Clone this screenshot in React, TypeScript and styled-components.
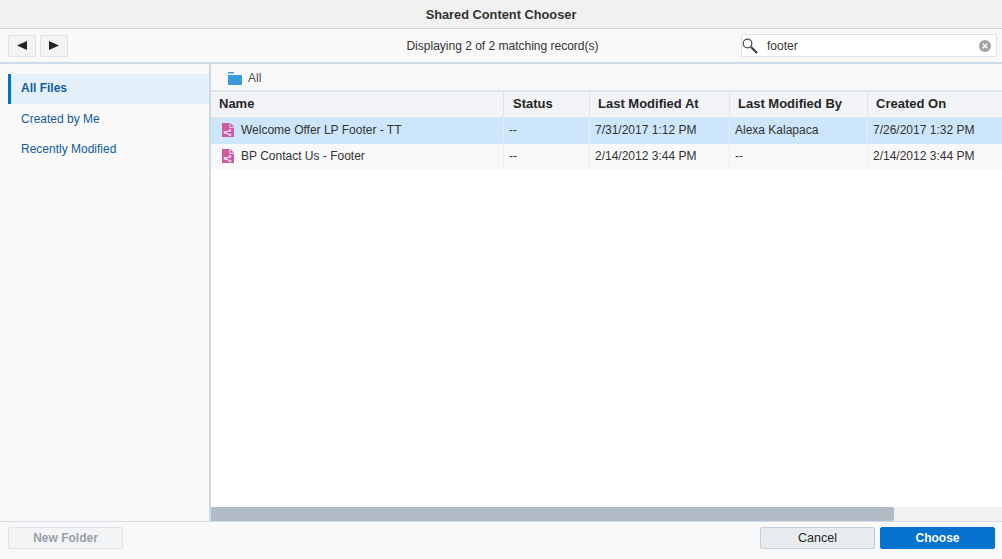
import styled, { createGlobalStyle } from 'styled-components'

const GlobalStyle = createGlobalStyle`
  html, body {
    margin: 0;
    padding: 0;
    background: #f9f9f9;
    font-family: "Liberation Sans", Arial, sans-serif;
    overflow: hidden;
  }
`

const Dialog = styled.div`
  width: 1002px;
  height: 559px;
  display: flex;
  flex-direction: column;
  background: #f9f9f9;
  color: #333;
  font-size: 12px;
`

const Title = styled.div`
  height: 29px;
  flex: none;
  box-sizing: border-box;
  display: flex;
  align-items: center;
  justify-content: center;
  padding-top: 1px;
  background: #f1f1f1;
  border-bottom: 1px solid #c9d5e2;
  font-size: 12.8px;
  font-weight: 700;
  color: #333;
`

const Toolbar = styled.div`
  height: 35px;
  flex: none;
  box-sizing: border-box;
  display: grid;
  grid-template-columns: 1fr auto 1fr;
  align-items: center;
  padding: 0 5px 0 8px;
  border-bottom: 2px solid #d0dae5;
`

const NavGroup = styled.div`
  display: flex;
  gap: 4px;
`

const NavButton = styled.button`
  width: 28px;
  height: 22px;
  padding: 0;
  display: flex;
  align-items: center;
  justify-content: center;
  background: #f3f4f6;
  border: 1px solid #dfe4ea;
  border-radius: 2px;
`

const Count = styled.div`
  color: #333;
  font-size: 12px;
`

const Search = styled.div`
  justify-self: end;
  width: 256px;
  height: 23px;
  box-sizing: border-box;
  display: flex;
  align-items: center;
  padding: 0 5px 0 0;
  background: #fff;
  border: 1px solid #dfe4ea;
  border-radius: 2px;
`

const SearchText = styled.span`
  flex: 1;
  margin-left: 9px;
  color: #333;
  font-size: 12px;
`

const Body = styled.div`
  flex: 1;
  min-height: 0;
  display: flex;
`

const Sidebar = styled.nav`
  width: 211px;
  flex: none;
  box-sizing: border-box;
  padding: 10px 0 0 8px;
  border-right: 2px solid #ced8e3;
`

const NavItem = styled.div<{ $active?: boolean }>`
  height: 30px;
  display: flex;
  align-items: center;
  box-sizing: border-box;
  padding-left: ${(p) => (p.$active ? '10px' : '13px')};
  padding-bottom: ${(p) => (p.$active ? '2px' : '0')};
  border-left: ${(p) => (p.$active ? '3px solid #0572ce' : 'none')};
  background: ${(p) => (p.$active ? '#e4f0fa' : 'transparent')};
  color: #145c9e;
  font-size: 12px;
  font-weight: ${(p) => (p.$active ? 700 : 400)};
`

const Main = styled.div`
  flex: 1;
  min-width: 0;
  display: flex;
  flex-direction: column;
  background: #fff;
`

const Crumb = styled.div`
  height: 28px;
  flex: none;
  box-sizing: border-box;
  display: flex;
  align-items: center;
  gap: 6px;
  padding: 2px 0 0 17px;
  background: #f9f9f9;
  border-bottom: 2px solid #dfe4ea;
  color: #4f4f4f;
  font-size: 12px;
`

const TableArea = styled.div`
  flex: 1;
  min-height: 0;
`

const Row = styled.div<{ $selected?: boolean; $head?: boolean }>`
  display: grid;
  grid-template-columns: 293px 86px 140px 138px 1fr;
  height: 26px;
  box-sizing: border-box;
  background: ${(p) => (p.$head ? '#f2f4f8' : p.$selected ? '#cde6fb' : '#f9f9f9')};
  border-bottom: ${(p) => (p.$head ? '1px solid #dfe4ea' : 'none')};
`

const HeadCell = styled.div`
  display: flex;
  align-items: center;
  padding: 0 0 3px 8px;
  border-right: 1px solid #dfe4ea;
  color: #252525;
  font-size: 13px;
  font-weight: 700;
  &:nth-child(2) {
    padding-left: 9px;
  }
  &:last-child {
    border-right: none;
  }
`

const Cell = styled.div`
  display: flex;
  align-items: center;
  gap: 7px;
  padding: 0 0 3px 5px;
  border-right: 1px solid #eceef1;
  color: #333;
  font-size: 12px;
  &:first-child {
    padding-left: 11px;
  }
  &:last-child {
    border-right: none;
  }
  svg {
    margin-top: 1px;
  }
`

const ScrollTrack = styled.div`
  height: 14px;
  flex: none;
  background: #f1f1f1;
`

const ScrollThumb = styled.div`
  width: 683px;
  height: 14px;
  background: #b1bcc7;
  border-radius: 0 2px 2px 0;
`

const Footer = styled.div`
  height: 38px;
  flex: none;
  box-sizing: border-box;
  display: flex;
  align-items: center;
  justify-content: space-between;
  padding: 0 7px 5px 8px;
  border-top: 1px solid #d4dde7;
`

const Actions = styled.div`
  display: flex;
  gap: 5px;
`

const DisabledButton = styled.button`
  width: 115px;
  height: 22px;
  padding: 0;
  background: #f3f4f6;
  border: 1px solid #dfe4ea;
  border-radius: 2px;
  color: #9aa0a6;
  font: 700 12px "Liberation Sans", Arial, sans-serif;
`

const CancelButton = styled.button`
  width: 115px;
  height: 22px;
  padding: 0;
  background: #e9ecef;
  border: 1px solid #c4ced7;
  border-radius: 2px;
  color: #252525;
  font: 400 12.5px "Liberation Sans", Arial, sans-serif;
`

const ChooseButton = styled.button`
  width: 115px;
  height: 22px;
  padding: 0;
  background: #0572ce;
  border: 1px solid #0572ce;
  border-radius: 2px;
  color: #fff;
  font: 700 12px "Liberation Sans", Arial, sans-serif;
`

const Triangle = ({ dir }: { dir: 'left' | 'right' }) => (
  <svg width="10" height="9" viewBox="0 0 10 9">
    <path d={dir === 'left' ? 'M0 4.500 10 0V9Z' : 'M10 4.500 0 0V9Z'} fill="#252525" />
  </svg>
)

const SearchIcon = () => (
  <svg width="16" height="16" viewBox="0 0 16 16" fill="none">
    <circle cx="5.500" cy="5.500" r="4.300" stroke="#4f4f4f" strokeWidth="1.300" />
    <path d="M9 9 15 15" stroke="#333" strokeWidth="2" />
  </svg>
)

const ClearIcon = () => (
  <svg width="12" height="12" viewBox="0 0 12 12">
    <circle cx="6" cy="6" r="6" fill="#a3a3a3" />
    <path d="M3.800 3.800 8.200 8.200M8.200 3.800 3.800 8.200" stroke="#fff" strokeWidth="1.500" />
  </svg>
)

const FolderIcon = () => (
  <svg width="14" height="13" viewBox="0 0 14 13">
    <path d="M0 0H6V1.500H0Z" fill="#3a9bdc" />
    <path d="M0 3H14V13H0Z" fill="#3a9bdc" />
  </svg>
)

const FileIcon = () => (
  <svg width="12" height="14" viewBox="0 0 12 14">
    <path d="M0 0H7.500V4.700H12V14H0Z" fill="#cf5aa3" />
    <path d="M8.300 0 12 3.700H8.300Z" fill="#cf5aa3" />
    <path d="M8 7.500 3 9.500 8 12" stroke="#f0dcec" strokeWidth="1.100" fill="none" />
    <circle cx="3" cy="9.500" r="1.400" fill="#f0dcec" />
    <circle cx="8" cy="7.500" r="1.300" fill="#f0dcec" />
    <circle cx="8" cy="12" r="1.300" fill="#f0dcec" />
  </svg>
)

const records = [
  ['Welcome Offer LP Footer - TT', '--', '7/31/2017 1:12 PM', 'Alexa Kalapaca', '7/26/2017 1:32 PM'],
  ['BP Contact Us - Footer', '--', '2/14/2012 3:44 PM', '--', '2/14/2012 3:44 PM'],
]

const App = () => {
  return (
    <Dialog>
      <GlobalStyle />
      <Title>Shared Content Chooser</Title>
      <Toolbar>
        <NavGroup>
          <NavButton>
            <Triangle dir="left" />
          </NavButton>
          <NavButton>
            <Triangle dir="right" />
          </NavButton>
        </NavGroup>
        <Count>Displaying 2 of 2 matching record(s)</Count>
        <Search>
          <SearchIcon />
          <SearchText>footer</SearchText>
          <ClearIcon />
        </Search>
      </Toolbar>
      <Body>
        <Sidebar>
          <NavItem $active>All Files</NavItem>
          <NavItem>Created by Me</NavItem>
          <NavItem>Recently Modified</NavItem>
        </Sidebar>
        <Main>
          <Crumb>
            <FolderIcon />
            All
          </Crumb>
          <TableArea>
            <Row $head>
              <HeadCell>Name</HeadCell>
              <HeadCell>Status</HeadCell>
              <HeadCell>Last Modified At</HeadCell>
              <HeadCell>Last Modified By</HeadCell>
              <HeadCell>Created On</HeadCell>
            </Row>
            {records.map((r, i) => (
              <Row key={r[0]} $selected={i === 0}>
                <Cell>
                  <FileIcon />
                  {r[0]}
                </Cell>
                <Cell>{r[1]}</Cell>
                <Cell>{r[2]}</Cell>
                <Cell>{r[3]}</Cell>
                <Cell>{r[4]}</Cell>
              </Row>
            ))}
          </TableArea>
          <ScrollTrack>
            <ScrollThumb />
          </ScrollTrack>
        </Main>
      </Body>
      <Footer>
        <DisabledButton>New Folder</DisabledButton>
        <Actions>
          <CancelButton>Cancel</CancelButton>
          <ChooseButton>Choose</ChooseButton>
        </Actions>
      </Footer>
    </Dialog>
  )
}

export default App
